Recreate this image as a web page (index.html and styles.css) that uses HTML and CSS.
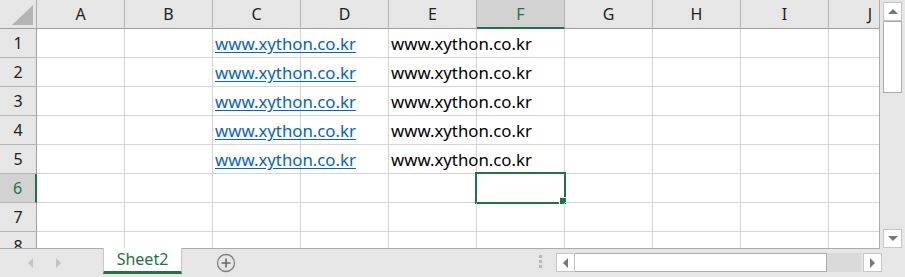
FILE: index.html
```html
<!DOCTYPE html>
<html lang="en">
<head>
	<meta charset="utf-8" />
	<title>Sheet2</title>
	<link rel="stylesheet" href="styles.css">
</head>
<body>

<div class="window">
	<div class="main">
		<div class="grid">
			<div class="corner"><div class="tri"></div></div>
			<div class="colhead">A</div>
			<div class="colhead">B</div>
			<div class="colhead">C</div>
			<div class="colhead">D</div>
			<div class="colhead">E</div>
			<div class="colhead active">F</div>
			<div class="colhead">G</div>
			<div class="colhead">H</div>
			<div class="colhead">I</div>
			<div class="colhead last">J</div>

			<div class="rowhead">1</div>
			<div class="cell"></div><div class="cell"></div>
			<div class="cell link">www.xython.co.kr</div><div class="cell"></div>
			<div class="cell">www.xython.co.kr</div><div class="cell"></div>
			<div class="cell"></div><div class="cell"></div><div class="cell"></div><div class="cell"></div>

			<div class="rowhead">2</div>
			<div class="cell"></div><div class="cell"></div>
			<div class="cell link">www.xython.co.kr</div><div class="cell"></div>
			<div class="cell">www.xython.co.kr</div><div class="cell"></div>
			<div class="cell"></div><div class="cell"></div><div class="cell"></div><div class="cell"></div>

			<div class="rowhead">3</div>
			<div class="cell"></div><div class="cell"></div>
			<div class="cell link">www.xython.co.kr</div><div class="cell"></div>
			<div class="cell">www.xython.co.kr</div><div class="cell"></div>
			<div class="cell"></div><div class="cell"></div><div class="cell"></div><div class="cell"></div>

			<div class="rowhead">4</div>
			<div class="cell"></div><div class="cell"></div>
			<div class="cell link">www.xython.co.kr</div><div class="cell"></div>
			<div class="cell">www.xython.co.kr</div><div class="cell"></div>
			<div class="cell"></div><div class="cell"></div><div class="cell"></div><div class="cell"></div>

			<div class="rowhead">5</div>
			<div class="cell"></div><div class="cell"></div>
			<div class="cell link">www.xython.co.kr</div><div class="cell"></div>
			<div class="cell">www.xython.co.kr</div><div class="cell"></div>
			<div class="cell"></div><div class="cell"></div><div class="cell"></div><div class="cell"></div>

			<div class="rowhead active">6</div>
			<div class="cell"></div><div class="cell"></div>
			<div class="cell"></div><div class="cell"></div>
			<div class="cell"></div><div class="cell selected"></div>
			<div class="cell"></div><div class="cell"></div><div class="cell"></div><div class="cell"></div>

			<div class="rowhead">7</div>
			<div class="cell"></div><div class="cell"></div>
			<div class="cell"></div><div class="cell"></div>
			<div class="cell"></div><div class="cell"></div>
			<div class="cell"></div><div class="cell"></div><div class="cell"></div><div class="cell"></div>

			<div class="rowhead">8</div>
			<div class="cell"></div><div class="cell"></div>
			<div class="cell"></div><div class="cell"></div>
			<div class="cell"></div><div class="cell"></div>
			<div class="cell"></div><div class="cell"></div><div class="cell"></div><div class="cell"></div>
		</div>

		<div class="vscroll">
			<div class="sbtn"><span class="arrow up"></span></div>
			<div class="vthumb"></div>
			<div class="vtrack"></div>
			<div class="sbtn"><span class="arrow down"></span></div>
		</div>
	</div>

	<div class="tabbar">
		<div class="nav">
			<span class="arrow left faint"></span>
			<span class="arrow right faint"></span>
		</div>
		<div class="tab">Sheet2</div>
		<div class="addsheet">
			<svg width="20" height="20" viewBox="0 0 20 20">
				<circle cx="10" cy="10" r="8.5" fill="none" stroke="#808080" stroke-width="1.3" />
				<path d="M10 5.5v9M5.5 10h9" stroke="#6a6a6a" stroke-width="1.6" />
			</svg>
		</div>
		<div class="spacer"></div>
		<div class="grip"><i></i><i></i><i></i></div>
		<div class="hscroll">
			<div class="sbtn"><span class="arrow left"></span></div>
			<div class="hthumb"></div>
			<div class="htrack"></div>
			<div class="sbtn"><span class="arrow right"></span></div>
		</div>
	</div>
</div>

</body>
</html>
```

FILE: styles.css
```css
body {
	margin: 0;
	font-family: 'Noto Sans', 'Open Sans', sans-serif;
	background: #e6e6e6;
}
.window {
	width: 905px;
	height: 277px;
	display: flex;
	flex-direction: column;
	overflow: hidden;
}
.main {
	display: flex;
	height: 249px;
}
.grid {
	width: 880px;
	height: 249px;
	overflow: hidden;
	display: grid;
	grid-template-columns: 37px repeat(9, 88px) 51px;
	grid-auto-rows: 29px;
	background: #fff;
	border-right: 1px solid #ababab;
	border-bottom: 1px solid #ababab;
	box-sizing: border-box;
}
.corner {
	background: #e6e6e6;
	border-right: 1px solid #ababab;
	border-bottom: 1px solid #9f9f9f;
	position: relative;
}
.tri {
	position: absolute;
	right: 3px;
	bottom: 3px;
	width: 0;
	height: 0;
	border-left: 21px solid transparent;
	border-bottom: 20px solid #b4b4b4;
}
.colhead {
	background: #e6e6e6;
	border-right: 1px solid #b5b5b5;
	border-bottom: 1px solid #9f9f9f;
	display: flex;
	align-items: center;
	justify-content: center;
	font-size: 16px;
	color: #222;
	box-sizing: border-box;
}
.colhead.last {
	justify-content: flex-end;
	padding-right: 8px;
	border-right: none;
}
.colhead.active {
	background: #d2d2d2;
	color: #217346;
	border-bottom: 2px solid #217346;
}
.rowhead {
	background: #e6e6e6;
	border-right: 1px solid #9f9f9f;
	border-bottom: 1px solid #b5b5b5;
	display: flex;
	align-items: center;
	justify-content: center;
	font-size: 16px;
	color: #222;
	box-sizing: border-box;
}
.rowhead.active {
	background: #d2d2d2;
	color: #217346;
	border-right: 2px solid #217346;
}
.cell {
	border-right: 1px solid #d4d4d4;
	border-bottom: 1px solid #d4d4d4;
	font-size: 16.8px;
	line-height: 29px;
	padding-left: 2px;
	white-space: nowrap;
	color: #000;
	position: relative;
	z-index: 1;
}
.cell.link {
	color: #0563c1;
	text-decoration: underline;
	text-underline-offset: 2px;
}
.cell:nth-child(11n+1) {
	border-right: none;
}
.cell.selected::after {
	content: '';
	position: absolute;
	left: -2px;
	top: -2px;
	right: -2px;
	bottom: -2px;
	border: 2px solid #217346;
}
.cell.selected::before {
	content: '';
	position: absolute;
	right: -3px;
	bottom: -3px;
	width: 6px;
	height: 6px;
	background: #217346;
	border: 1px solid #fff;
	z-index: 2;
}
.vscroll {
	width: 25px;
	display: flex;
	flex-direction: column;
	align-items: center;
	padding: 2px 0 1px 0;
	box-sizing: border-box;
}
.sbtn {
	width: 19px;
	height: 19px;
	background: #fff;
	border: 1px solid #c6c6c6;
	box-sizing: border-box;
	display: flex;
	align-items: center;
	justify-content: center;
}
.vthumb {
	width: 19px;
	height: 72px;
	background: #fff;
	border: 1px solid #ababab;
	box-sizing: border-box;
}
.vtrack {
	flex: 1;
}
.arrow {
	width: 0;
	height: 0;
}
.arrow.up {
	border-left: 5px solid transparent;
	border-right: 5px solid transparent;
	border-bottom: 5px solid #777;
}
.arrow.down {
	border-left: 5px solid transparent;
	border-right: 5px solid transparent;
	border-top: 5px solid #777;
}
.arrow.left {
	border-top: 5px solid transparent;
	border-bottom: 5px solid transparent;
	border-right: 5px solid #777;
}
.arrow.right {
	border-top: 5px solid transparent;
	border-bottom: 5px solid transparent;
	border-left: 5px solid #777;
}
.arrow.faint.left {
	border-right-color: #c4c4c4;
}
.arrow.faint.right {
	border-left-color: #c4c4c4;
}
.tabbar {
	flex: 1;
	display: flex;
	align-items: flex-start;
}
.nav {
	width: 103px;
	height: 28px;
	display: flex;
	align-items: center;
	gap: 23px;
	padding-left: 28px;
	box-sizing: border-box;
}
.tab {
	width: 79px;
	height: 26px;
	background: #fff;
	border-left: 1px solid #c6c6c6;
	border-right: 1px solid #c6c6c6;
	border-bottom: 3px solid #217346;
	box-sizing: border-box;
	margin-top: -1px;
	color: #217346;
	font-size: 16px;
	line-height: 22px;
	text-align: center;
}
.addsheet {
	margin-left: 34px;
	margin-top: 4px;
	height: 20px;
}
.spacer {
	flex: 1;
}
.grip {
	display: flex;
	flex-direction: column;
	gap: 2px;
	margin-top: 6px;
	margin-right: 14px;
}
.grip i {
	width: 3px;
	height: 3px;
	background: #b8b8b8;
}
.hscroll {
	display: flex;
	margin-top: 4px;
	margin-right: 23px;
}
.hthumb {
	width: 252px;
	height: 19px;
	background: #fff;
	border: 1px solid #ababab;
	border-left: none;
	box-sizing: border-box;
}
.htrack {
	width: 34px;
	height: 19px;
	background: #dadada;
	margin-right: 2px;
}
```
